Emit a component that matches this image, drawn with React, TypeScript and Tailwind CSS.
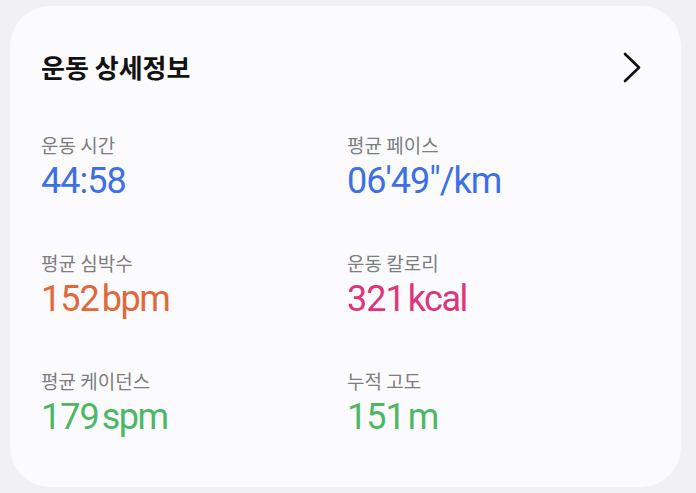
import React from "react";

const items = [
  { label: "운동 시간", num: "44:58", unit: "", color: "text-[#3d6fe6]" },
  { label: "평균 페이스", num: "06'49\"/km", unit: "", color: "text-[#3d6fe6]" },
  { label: "평균 심박수", num: "152", unit: "bpm", color: "text-[#e2673a]" },
  { label: "운동 칼로리", num: "321", unit: "kcal", color: "text-[#e0347a]" },
  { label: "평균 케이던스", num: "179", unit: "spm", color: "text-[#4cb865]" },
  { label: "누적 고도", num: "151", unit: "m", color: "text-[#4cb865]" },
];

export default function App() {
  return (
    <div className="w-[696px] h-[493px] bg-[#f1f1f3] pt-[6px] pl-[10px]">
      <div className="w-[671px] h-[481px] rounded-[40px] bg-[#fbfbfd] pl-[31px] pr-[40px]">
        <div className="flex items-center justify-between pt-[46px] h-[76px]">
          <div
            className="text-[26px] leading-[30px] font-bold text-[#111]"
            style={{ fontFamily: '"Noto Sans CJK KR", sans-serif' }}
          >
            운동 상세정보
          </div>
          <svg width="18" height="31" viewBox="0 0 18 31" fill="none">
            <path d="M2 2 L16 15.5 L2 29" stroke="#111" strokeWidth="2.6" strokeLinecap="round" strokeLinejoin="round" />
          </svg>
        </div>
        <div className="grid grid-cols-[306px_1fr] gap-y-[50px] mt-[51px]">
          {items.map((it) => (
            <div key={it.label} className="flex flex-col gap-[4px]">
              <div
                className="text-[19px] leading-[24px] text-[#7d7d80]"
                style={{ fontFamily: '"Noto Sans CJK KR", sans-serif' }}
              >
                {it.label}
              </div>
              <div
                className={`text-[36px] leading-[40px] tracking-[-1px] ${it.color}`}
                style={{ fontFamily: 'Roboto, "Noto Sans", sans-serif' }}
              >
                {it.num}
                {it.unit && <span className="ml-[3px] tracking-[-1.5px]">{it.unit}</span>}
              </div>
            </div>
          ))}
        </div>
      </div>
    </div>
  );
}
